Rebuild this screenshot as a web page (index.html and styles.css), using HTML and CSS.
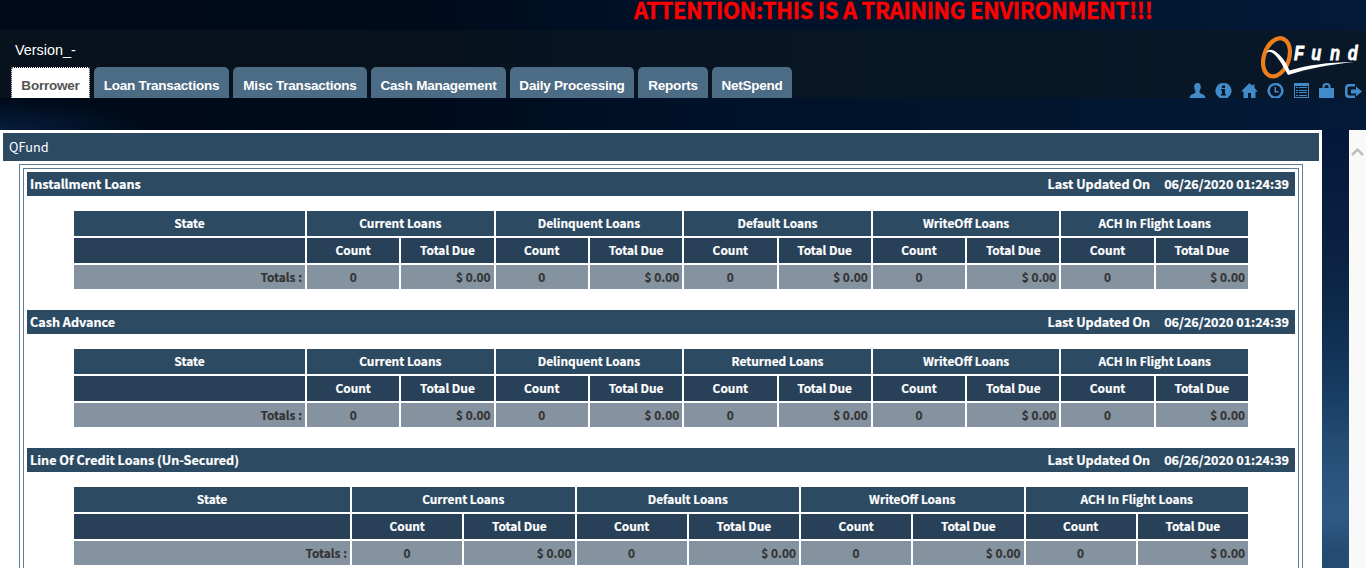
FILE: index.html
```html
<!DOCTYPE html>
<html lang="en">
<head>
<meta charset="utf-8">
<title>QFund</title>
<link rel="stylesheet" href="styles.css">
</head>
<body>
<header class="header">
  <div class="notice">ATTENTION:THIS IS A TRAINING ENVIRONMENT!!!</div>
  <div class="band">
    <div class="left">
      <div class="version">Version_-</div>
      <nav class="tabs">
        <a class="tab active"><span>Borrower</span></a><a class="tab t2">Loan Transactions</a><a class="tab t3">Misc Transactions</a><a class="tab t4">Cash Management</a><a class="tab t5">Daily Processing</a><a class="tab t6">Reports</a><a class="tab t7">NetSpend</a>
      </nav>
    </div>
    <div class="right">
      <svg class="logo" viewBox="0 0 114 50" width="114" height="50">
        <g transform="rotate(19 24.500 27.300)">
          <ellipse cx="24.500" cy="27.300" rx="12.500" ry="19.700" fill="none" stroke="#ee7e1a" stroke-width="4.200"/>
        </g>
        <path fill="#fff" d="M14.500 23C16 19 20 19 24 22C30 26 35 34 37.500 40.500C54 35.500 76 32 102 32C78 34.500 56 38.500 36 45C32 38 28 30 23.500 25.500C20 22 17 20.500 14.500 23Z"/>
        <g transform="translate(42 30) scale(.78 1)">
          <text class="logo-text" y="0"><tspan x="0">F</tspan><tspan x="22">u</tspan><tspan x="46">n</tspan><tspan x="69">d</tspan></text>
        </g>
      </svg>
      <div class="icons">
        <svg viewBox="0 0 17 15"><path d="M8.500 0C11 0 12 2 11.800 4.500C11.600 6.500 10.500 7.500 10.500 9C10.500 11 16.500 11 16.500 15H.5C.5 11 6.500 11 6.500 9C6.500 7.500 5.400 6.500 5.200 4.500C5 2 6 0 8.500 0Z"/></svg>
        <svg viewBox="0 0 17 15"><path fill-rule="evenodd" d="M8.500 0A7.900 7.900 0 0 1 13.500 14.100L12.500 15H4.500L3.500 14.100A7.900 7.900 0 0 1 8.500 0ZM7 2.500V5H10V2.500ZM6 6V7.500H7V11H6V12.500H11V11H10V6Z"/></svg>
        <svg viewBox="0 0 17 15"><path d="M8.500 0L11.500 3V1.500H13.500V5L17 8.500H14.500V15H10V10H7V15H2.500V8.500H0Z"/></svg>
        <svg viewBox="0 0 17 15"><path fill-rule="evenodd" d="M8.500 0A7.900 7.900 0 0 1 13.500 14.100L12.500 15H4.500L3.500 14.100A7.900 7.900 0 0 1 8.500 0ZM8.500 2.200A5.600 5.600 0 1 0 8.500 13.400A5.600 5.600 0 1 0 8.500 2.200ZM7.500 4H9V8H11.500V9.500H7.500Z"/></svg>
        <svg viewBox="0 0 17 15"><path fill-rule="evenodd" d="M1 0H16V15H1ZM2 3V14H15V3ZM3 4H5V5H3ZM6 4H14V5H6ZM3 7H5V8H3ZM6 7H14V8H6ZM3 9H5V10H3ZM6 9H14V10H6ZM3 12H5V13H3ZM6 12H14V13H6Z"/></svg>
        <svg viewBox="0 0 17 15"><path fill-rule="evenodd" d="M3.500 5V3Q3.500 0 7.500 0Q11.500 0 11.500 3V5H15V15H0V5ZM5.500 5H9.500V3.500Q9.500 2 7.500 2Q5.500 2 5.500 3.500Z"/></svg>
        <svg viewBox="0 0 17 15"><path d="M10 1H4Q0 1 0 5V11Q0 15 4 15H10V12.500H4.500Q2.500 12.500 2.500 10.500V5.500Q2.500 3.500 4.500 3.500H10ZM11 3.500L17 8.500L11 13.500V10.500H6V6.500H11Z"/></svg>
      </div>
    </div>
  </div>
</header>
<div class="body">
  <main class="panel">
    <h1 class="title">QFund</h1>
    <div class="frame"><div class="inner" id="sections"></div></div>
  </main>
  <aside class="scrollbar"><svg width="13" height="12" viewBox="0 0 13 12"><path d="M1 10L6.500 4.500L12 10" fill="none" stroke="#bfbfbf" stroke-width="2.600"/></svg></aside>
</div>
<script src="main.js"></script>
</body>
</html>
```
FILE: styles.css
```css
* { box-sizing: border-box; }
body {
  margin: 0; width: 1366px; height: 568px; overflow: hidden;
  font-family: "Noto Sans CJK SC", sans-serif; color: #fff;
  display: flex; flex-direction: column; background: #04173a;
}
.header {
  height: 130px; flex: none;
  background:
    radial-gradient(ellipse 150px 32px at 0 130px, #061d3d, rgba(6,29,61,0)),
    linear-gradient(90deg, #000a18 0, #000b1b 30%, #00122a 52%, #01152d 75%, #041a38 100%);
}
.notice {
  height: 30px; padding-left: 634px; color: #f00; font-weight: 700;
  font-size: 22px; line-height: 19px; white-space: nowrap;
  letter-spacing: -.27px; -webkit-text-stroke: .4px #f00;
}
.band { height: 68px; background: rgba(12,24,32,.6); display: flex; justify-content: space-between; }
.left { padding: 10px 0 0 11px; font-family: "Liberation Sans", Arial, sans-serif; }
.version { height: 27px; padding-left: 4px; font-size: 14.400px; line-height: 20px; }
.tabs { display: flex; gap: 4px; }
.tab {
  height: 31px; padding-top: 1px; line-height: 35px; text-align: center;
  border-radius: 5px 5px 0 0; background: #4c6b84;
  font-size: 13.500px; letter-spacing: -.22px; font-weight: 700; white-space: nowrap;
}
.active {
  width: 79px; color: #555; background: #fff; background-clip: padding-box;
  border: 1px dotted #fff; border-bottom: 0; border-radius: 2px 2px 0 0; padding-top: 0;
}
.t2 { width: 135px; } .t3 { width: 134px; } .t4 { width: 135px; }
.t5 { width: 124px; } .t6 { width: 70px; } .t7 { width: 80px; }
.right { width: 178px; display: flex; flex-direction: column; align-items: flex-end; }
.logo { display: block; }
.logo-text { font: italic 700 21px "Liberation Sans", Arial, sans-serif; fill: #fff; stroke: #fff; stroke-width: .8px; }
.icons { display: flex; gap: 9px; padding: 3px 4px 0 0; }
.icons svg { width: 17px; height: 15px; fill: #428bca; }
.body {
  flex: 1; min-height: 0; display: flex; justify-content: space-between;
  background: linear-gradient(#04173a 0, #0b2143 28%, #0e2b4b 42%, #163a61 58%, #275079 75%, #2f5a86 88%, #244b72 96%);
}
.panel { width: 1322px; background: #fff; padding: 3px 3px 0; overflow: hidden; }
.title {
  margin: 0; height: 28px; background: #2d4a63; padding-left: 6px;
  font-size: 12.700px; font-weight: 400; line-height: 28px;
}
.frame { margin: 3px 16px 0; border: 1px solid #5b7d98; padding: 3px; height: 700px; }
.inner { border: 1px solid #5b7d98; padding: 3px; height: 690px; }
.bar {
  height: 24px; background: #2d4a63; display: flex; justify-content: space-between;
  padding: 0 6px 0 3px; font-size: 12.600px; font-weight: 700; line-height: 24px; white-space: nowrap;
  -webkit-text-stroke: .2px;
}
.updated { display: flex; gap: 14px; }
.grid {
  display: grid; grid-template-rows: 25px 25px 24px; gap: 2px; margin: 15px 47px 21px;
  font-size: 11.900px; font-weight: 700; text-align: center; line-height: 24px; white-space: nowrap;
  -webkit-text-stroke: .2px;
}
.ten { grid-template-columns: 231px repeat(10, 1fr); }
.eight { grid-template-columns: 276px repeat(8, 1fr); }
.group { background: #2d4a63; }
.wide { grid-column: span 2; }
.sub { background: #284158; }
.cell { background: #8593a0; color: #333; }
.money { text-align: right; padding-right: 3px; }
.scrollbar { width: 17px; background: #f9f9f9; padding: 15px 0 0 2px; }
.scrollbar svg { display: block; }
```
FILE: main.js
```js
const sections = [
  ["Installment Loans", ["Current Loans", "Delinquent Loans", "Default Loans", "WriteOff Loans", "ACH In Flight Loans"]],
  ["Cash Advance", ["Current Loans", "Delinquent Loans", "Returned Loans", "WriteOff Loans", "ACH In Flight Loans"]],
  ["Line Of Credit Loans (Un-Secured)", ["Current Loans", "Default Loans", "WriteOff Loans", "ACH In Flight Loans"]]
];
document.getElementById("sections").innerHTML = sections.map(([name, groups]) => `
  <div class="bar"><span>${name}</span><span class="updated"><span>Last Updated On</span><span>06/26/2020 01:24:39</span></span></div>
  <div class="grid ${groups.length === 5 ? "ten" : "eight"}">
    <div class="group">State</div>${groups.map(g => `<div class="group wide">${g}</div>`).join("")}
    <div class="sub"></div>${groups.map(() => `<div class="sub">Count</div><div class="sub">Total Due</div>`).join("")}
    <div class="cell money">Totals :</div>${groups.map(() => `<div class="cell">0</div><div class="cell money">$ 0.00</div>`).join("")}
  </div>`).join("");
```
